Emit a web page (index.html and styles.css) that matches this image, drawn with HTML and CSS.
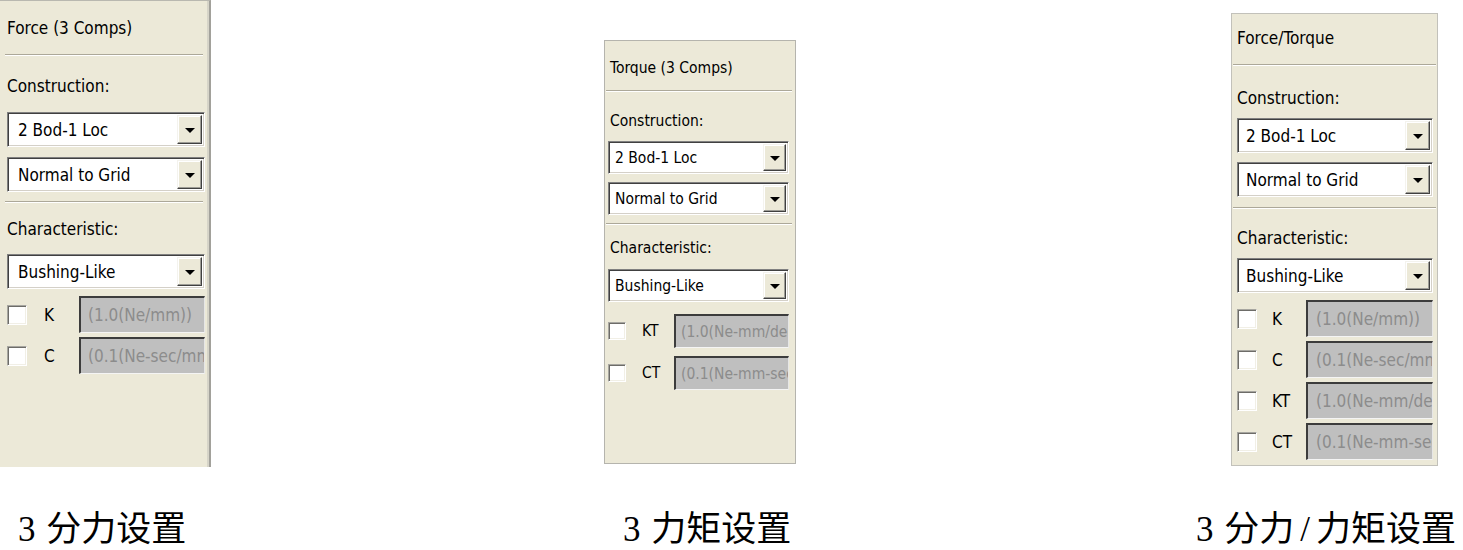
FILE: index.html
```html
<!DOCTYPE html>
<html lang="zh-CN">
<head>
<meta charset="utf-8">
<title>Force / Torque settings</title>
<link rel="stylesheet" href="styles.css">
</head>
<body>
<div class="page">
  <div class="panels">
    <section class="panel panel-force">
      <div class="title">Force (3 Comps)</div>
      <div class="sep"></div>
      <div class="label label-con">Construction:</div>
      <div class="combo"><span class="combo-text">2 Bod-1 Loc</span><span class="combo-btn"><span class="arrow"></span></span></div>
      <div class="combo combo-2"><span class="combo-text">Normal to Grid</span><span class="combo-btn"><span class="arrow"></span></span></div>
      <div class="sep sep-2"></div>
      <div class="label label-char">Characteristic:</div>
      <div class="combo"><span class="combo-text">Bushing-Like</span><span class="combo-btn"><span class="arrow"></span></span></div>
      <div class="field field-first"><span class="check"></span><span class="flabel">K</span><span class="input">(1.0(Ne/mm))</span></div>
      <div class="field"><span class="check"></span><span class="flabel">C</span><span class="input">(0.1(Ne-sec/mm))</span></div>
    </section>

    <section class="panel panel-torque">
      <div class="title">Torque (3 Comps)</div>
      <div class="sep"></div>
      <div class="label label-con">Construction:</div>
      <div class="combo"><span class="combo-text">2 Bod-1 Loc</span><span class="combo-btn"><span class="arrow"></span></span></div>
      <div class="combo combo-2"><span class="combo-text">Normal to Grid</span><span class="combo-btn"><span class="arrow"></span></span></div>
      <div class="sep sep-2"></div>
      <div class="label label-char">Characteristic:</div>
      <div class="combo"><span class="combo-text">Bushing-Like</span><span class="combo-btn"><span class="arrow"></span></span></div>
      <div class="field field-first"><span class="check"></span><span class="flabel">KT</span><span class="input">(1.0(Ne-mm/deg))</span></div>
      <div class="field"><span class="check"></span><span class="flabel">CT</span><span class="input">(0.1(Ne-mm-sec/deg))</span></div>
    </section>

    <section class="panel panel-both">
      <div class="title">Force/Torque</div>
      <div class="sep"></div>
      <div class="label label-con">Construction:</div>
      <div class="combo"><span class="combo-text">2 Bod-1 Loc</span><span class="combo-btn"><span class="arrow"></span></span></div>
      <div class="combo combo-2"><span class="combo-text">Normal to Grid</span><span class="combo-btn"><span class="arrow"></span></span></div>
      <div class="sep sep-2"></div>
      <div class="label label-char">Characteristic:</div>
      <div class="combo"><span class="combo-text">Bushing-Like</span><span class="combo-btn"><span class="arrow"></span></span></div>
      <div class="field field-first"><span class="check"></span><span class="flabel">K</span><span class="input">(1.0(Ne/mm))</span></div>
      <div class="field"><span class="check"></span><span class="flabel">C</span><span class="input">(0.1(Ne-sec/mm))</span></div>
      <div class="field"><span class="check"></span><span class="flabel">KT</span><span class="input">(1.0(Ne-mm/deg))</span></div>
      <div class="field"><span class="check"></span><span class="flabel">CT</span><span class="input">(0.1(Ne-mm-sec/deg))</span></div>
    </section>
  </div>

  <div class="captions">
    <p class="caption">3 分力设置</p>
    <p class="caption">3 力矩设置</p>
    <p class="caption">3 分力<span class="slash">/</span>力矩设置</p>
  </div>
</div>
</body>
</html>
```

FILE: styles.css
```css
html, body {
  margin: 0;
  padding: 0;
  background: #ffffff;
}

.page {
  width: 1463px;
  height: 550px;
  overflow: hidden;
}

.panels {
  display: grid;
  grid-template-columns: 604px 627px 1fr;
  align-items: start;
  height: 490px;
}

/* ---------- panel ---------- */
.panel {
  box-sizing: border-box;
  display: flex;
  flex-direction: column;
  background: #ece9d8;
  color: #000;
  font-family: "DejaVu Sans Condensed", "Liberation Sans", Arial, sans-serif;
  font-stretch: condensed;
  font-size: var(--fs);
  padding: 0 var(--pr) 0 var(--pl);
  overflow: hidden;
}

.panel-force {
  --fs: 17px;
  --pl: 7px;
  --pr: 4px;
  --title-h: 53px;
  --title-pt: 0px;
  --title-pb: 0px;
  --lab1-h: 56px;
  --lab1-pt: 4px;
  --combo-h: 35px;
  --combo-gap: 10px;
  --combo-pl: 8px;
  --btn-w: 25px;
  --sep2-mt: 9px;
  --lab2-h: 51px;
  --lab2-pt: 0px;
  --field-mt: 7px;
  --field-h: 37px;
  --field-gap: 4px;
  --check: 20px;
  --flabel-ml: 17px;
  --input-w: 126px;
  --input-pl: 7px;
  --sep-ml: -2px;
  --sep-mr: 2px;
  --indent: 0px;
  width: 211px;
  height: 467px;
  border-top: 1px solid #b9b8b0;
  border-right: 2px solid #a2a19b;
  box-shadow: inset -2px 0 0 #d6d4c8;
}

.panel-torque {
  --fs: 15.5px;
  --pl: 3px;
  --pr: 6px;
  --title-h: 49px;
  --title-pt: 4px;
  --title-pb: 0px;
  --lab1-h: 49px;
  --lab1-pt: 8px;
  --combo-h: 33px;
  --combo-gap: 8px;
  --combo-pl: 4px;
  --btn-w: 23px;
  --sep2-mt: 8px;
  --lab2-h: 44px;
  --lab2-pt: 2px;
  --field-mt: 12px;
  --field-h: 34px;
  --field-gap: 8px;
  --check: 18px;
  --flabel-ml: 16px;
  --input-w: 115px;
  --input-pl: 5px;
  --sep-ml: -2px;
  --sep-mr: -3px;
  --indent: 2px;
  margin-top: 40px;
  width: 192px;
  height: 424px;
  border: 1px solid #b5b4ad;
}

.panel-both {
  --fs: 17px;
  --pl: 5px;
  --pr: 4px;
  --title-h: 50px;
  --title-pt: 0px;
  --title-pb: 2px;
  --lab1-h: 52px;
  --lab1-pt: 12px;
  --combo-h: 35px;
  --combo-gap: 9px;
  --combo-pl: 6px;
  --btn-w: 25px;
  --sep2-mt: 10px;
  --lab2-h: 49px;
  --lab2-pt: 9px;
  --field-mt: 7px;
  --field-h: 37px;
  --field-gap: 4px;
  --check: 20px;
  --flabel-ml: 15px;
  --input-w: 127px;
  --input-pl: 8px;
  --sep-ml: -4px;
  --sep-mr: -3px;
  --indent: 0px;
  margin-top: 13px;
  width: 207px;
  height: 453px;
  border: 1px solid #c2c1ba;
}

.title,
.label {
  box-sizing: border-box;
  display: flex;
  align-items: center;
  padding-left: var(--indent);
  white-space: nowrap;
}

.title {
  height: var(--title-h);
  padding-top: var(--title-pt);
  padding-bottom: var(--title-pb);
}

.label-con {
  height: var(--lab1-h);
  padding-top: var(--lab1-pt);
}

.label-char {
  height: var(--lab2-h);
  padding-top: var(--lab2-pt);
}

.sep {
  flex: none;
  height: 0;
  border-top: 1px solid #aca899;
  border-bottom: 1px solid #ffffff;
  margin-left: var(--sep-ml);
  margin-right: var(--sep-mr);
}

.sep-2 {
  margin-top: var(--sep2-mt);
}

/* ---------- combo box ---------- */
.combo {
  flex: none;
  box-sizing: border-box;
  display: flex;
  align-items: stretch;
  height: var(--combo-h);
  background: #ffffff;
  border-top: 1px solid #808080;
  border-left: 1px solid #808080;
  border-right: 1px solid #ffffff;
  border-bottom: 1px solid #ffffff;
  box-shadow: inset 1px 1px 0 #404040, inset -1px -1px 0 #d4d0c8;
  padding: 2px;
}

.combo-2 {
  margin-top: var(--combo-gap);
}

.combo-text {
  flex: 1;
  display: flex;
  align-items: center;
  padding-left: var(--combo-pl);
  white-space: nowrap;
  overflow: hidden;
}

.combo-btn {
  flex: none;
  box-sizing: border-box;
  width: var(--btn-w);
  display: flex;
  align-items: center;
  justify-content: center;
  background: #ece9d8;
  border-top: 1px solid #f4f3ee;
  border-left: 1px solid #f4f3ee;
  border-right: 1px solid #404040;
  border-bottom: 1px solid #404040;
  box-shadow: inset -1px -1px 0 #9d9c96, inset 1px 1px 0 #ffffff;
}

.arrow {
  width: 0;
  height: 0;
  border-left: 5px solid transparent;
  border-right: 5px solid transparent;
  border-top: 5px solid #000;
  margin-top: 1px;
}

/* ---------- checkbox rows ---------- */
.field {
  flex: none;
  display: flex;
  align-items: center;
  height: var(--field-h);
  margin-top: var(--field-gap);
}

.field-first {
  margin-top: var(--field-mt);
}

.check {
  flex: none;
  box-sizing: border-box;
  width: var(--check);
  height: var(--check);
  background: #ffffff;
  border-top: 1px solid #a7a6a0;
  border-left: 1px solid #a7a6a0;
  border-right: 1px solid #ffffff;
  border-bottom: 1px solid #ffffff;
  box-shadow: inset 1px 1px 0 #6d6c68, inset -1px -1px 0 #f1efe6;
}

.flabel {
  margin-left: var(--flabel-ml);
  white-space: nowrap;
}

.input {
  flex: none;
  box-sizing: border-box;
  margin-left: auto;
  width: var(--input-w);
  height: 100%;
  display: flex;
  align-items: center;
  padding-left: var(--input-pl);
  background: #bfbfbf;
  color: #8c8c8c;
  white-space: nowrap;
  overflow: hidden;
  border-top: 2px solid #3c3c3c;
  border-left: 2px solid #3c3c3c;
  border-right: 1px solid #e6e6e6;
  border-bottom: 1px solid #f4f4f4;
}

/* ---------- captions ---------- */
.captions {
  display: grid;
  grid-template-columns: 605px 573px 1fr;
}

.caption {
  margin: 20px 0 0;
  padding-left: 18px;
  font-family: "Liberation Serif", "Noto Sans CJK SC", serif;
  font-size: 35px;
  line-height: 40px;
  word-spacing: 2px;
  color: #000;
  white-space: nowrap;
}

.slash {
  margin: 0 6px;
}
```
